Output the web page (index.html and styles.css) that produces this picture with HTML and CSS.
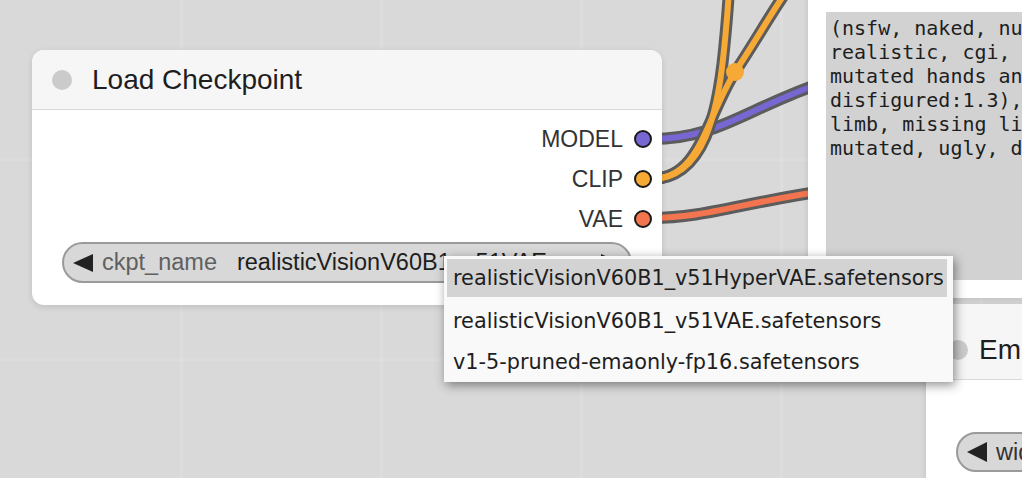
FILE: index.html
```html
<!DOCTYPE html>
<html>
<head>
<meta charset="utf-8">
<link rel="stylesheet" href="styles.css">
</head>
<body>
<div class="canvas">
  <svg class="wires" width="1022" height="478" viewBox="0 0 1022 478">
    <g fill="none" stroke-linecap="round">
      <path class="wire-outline" d="M651,139 C720,139 745,108 830,80"/>
      <path class="wire-core" stroke="#7767d3" d="M651,139 C720,139 745,108 830,80"/>
      <path class="wire-outline" d="M651,218 C705,218 740,203 830,190"/>
      <path class="wire-core" stroke="#f2754f" d="M651,218 C705,218 740,203 830,190"/>
      <path class="wire-outline" d="M651,179 C705,179 718,110 724,50 C726,30 728,10 729,-12"/>
      <path class="wire-outline" d="M651,179 C700,179 705,120 735,72 C755,42 770,15 786,-8"/>
      <path class="wire-core" stroke="#f6a935" d="M651,179 C705,179 718,110 724,50 C726,30 728,10 729,-12"/>
      <path class="wire-core" stroke="#f6a935" d="M651,179 C700,179 705,120 735,72 C755,42 770,15 786,-8"/>
    </g>
    <circle cx="735" cy="72" r="9" fill="#f6a935"/>
  </svg>

  <div class="node node-ckpt">
    <div class="node-header">
      <span class="node-dot"></span>
      <span class="node-title">Load Checkpoint</span>
    </div>
    <div class="node-body">
      <div class="outputs">
        <div class="out-row"><span class="out-label">MODEL</span><span class="slot slot-model"></span></div>
        <div class="out-row"><span class="out-label">CLIP</span><span class="slot slot-clip"></span></div>
        <div class="out-row"><span class="out-label">VAE</span><span class="slot slot-vae"></span></div>
      </div>
      <div class="combo">
        <svg class="arrow" width="20" height="18" viewBox="0 0 20 18"><polygon points="0,9 20,0 20,18" fill="#222"/></svg>
        <span class="combo-name">ckpt_name</span>
        <span class="combo-value">realisticVisionV60B1_v51VAE.safetensors</span>
        <svg class="arrow" width="20" height="18" viewBox="0 0 20 18"><polygon points="0,0 20,9 0,18" fill="#222"/></svg>
      </div>
    </div>
  </div>

  <div class="node node-prompt">
    <div class="prompt-area">(nsfw, naked, nude, deformed iris, deformed pupils, semi-
realistic, cgi, 3d, render, sketch, cartoon, drawing, anime,
mutated hands and fingers:1.4), (deformed, distorted,
disfigured:1.3), poorly drawn, bad anatomy, wrong anatomy, extra
limb, missing limb, floating limbs, disconnected limbs, mutation,
mutated, ugly, disgusting, amputation</div>
  </div>

  <div class="node node-latent">
    <div class="node-header latent-header">
      <span class="node-dot"></span>
      <span class="node-title">Empty Latent Image</span>
    </div>
    <div class="latent-body">
      <div class="combo combo-small">
        <svg class="arrow" width="20" height="20" viewBox="0 0 20 20"><polygon points="0,10 20,0 20,20" fill="#222"/></svg>
        <span class="combo-name dark">width</span>
      </div>
    </div>
  </div>

  <div class="menu">
    <div class="menu-item active">realisticVisionV60B1_v51HyperVAE.safetensors</div>
    <div class="menu-item">realisticVisionV60B1_v51VAE.safetensors</div>
    <div class="menu-item">v1-5-pruned-emaonly-fp16.safetensors</div>
  </div>
</div>
</body>
</html>
```

FILE: styles.css
```css
html, body {
  margin: 0;
  padding: 0;
}

body {
  width: 1022px;
  height: 478px;
  overflow: hidden;
  background-color: #d9d9d9;
  font-family: "Liberation Sans", Arial, sans-serif;
}

.canvas {
  position: relative;
  width: 1022px;
  height: 478px;
  overflow: hidden;
  background-image:
    linear-gradient(90deg, rgba(255,255,255,0.1) 3px, transparent 3px),
    linear-gradient(rgba(255,255,255,0.07) 3px, transparent 3px);
  background-size: 200px 200px;
  background-position: 180px 158px;
}

.wires {
  position: absolute;
  left: 0;
  top: 0;
}

.wire-outline {
  stroke: #5c5c5c;
  stroke-width: 12;
}

.wire-core {
  stroke-width: 6;
}

.node {
  position: absolute;
  background: #ffffff;
  box-shadow: 0 2px 6px rgba(0,0,0,0.12);
}

.node-ckpt {
  left: 32px;
  top: 50px;
  width: 630px;
  height: 255px;
  border-radius: 12px;
  display: flex;
  flex-direction: column;
}

.node-header {
  height: 59px;
  background: #f6f6f6;
  border-bottom: 1px solid #dadada;
  border-radius: 12px 12px 0 0;
  display: flex;
  align-items: center;
  padding-left: 20px;
  gap: 20px;
}

.node-dot {
  width: 20px;
  height: 20px;
  border-radius: 50%;
  background: #cbcbcb;
  flex: none;
}

.node-title {
  font-size: 28px;
  color: #1e1e1e;
  white-space: nowrap;
}

.node-body {
  padding: 9px 10px 0 30px;
  display: flex;
  flex-direction: column;
}

.outputs {
  display: flex;
  flex-direction: column;
  align-items: flex-end;
}

.out-row {
  height: 40px;
  display: flex;
  align-items: center;
  gap: 11px;
}

.out-label {
  font-size: 23px;
  color: #333;
}

.slot {
  width: 14px;
  height: 14px;
  border-radius: 50%;
  border: 2px solid #1a1a1a;
}

.slot-model { background: #7767d3; }
.slot-clip { background: #f6a935; }
.slot-vae { background: #f2754f; }

.combo {
  margin-top: 3px;
  margin-right: 20px;
  height: 37px;
  border: 2px solid #9a9a9a;
  border-radius: 22px;
  background: #d8d8d8;
  display: flex;
  align-items: center;
  padding: 0 9px 0 9px;
  gap: 0;
}

.combo .arrow {
  flex: none;
}

.combo-name {
  font-size: 23.5px;
  color: #606060;
  margin-left: 9px;
  white-space: nowrap;
}

.combo-name.dark {
  color: #333;
}

.combo-value {
  flex: 1;
  font-size: 23.5px;
  color: #1e1e1e;
  margin-left: 20px;
  white-space: nowrap;
  overflow: hidden;
  text-overflow: ellipsis;
  padding-right: 8px;
}

.node-prompt {
  left: 808px;
  top: -30px;
  width: 260px;
  height: 328px;
  border-radius: 12px;
  padding: 42px 0 0 18px;
  box-sizing: border-box;
}

.prompt-area {
  height: 268px;
  background: #d2d2d2;
  padding: 4px 0 0 4px;
  box-sizing: border-box;
  font-family: "DejaVu Sans Mono", monospace;
  font-size: 20px;
  line-height: 24px;
  color: #1e1e1e;
  white-space: pre;
  overflow: hidden;
}

.node-latent {
  left: 926px;
  top: 304px;
  width: 200px;
  height: 200px;
  border-radius: 12px;
  display: flex;
  flex-direction: column;
}

.latent-header {
  padding-top: 16px;
  box-sizing: border-box;
  height: 76px;
  gap: 11px;
  padding-left: 22px;
}

.latent-body {
  padding: 52px 0 0 30px;
}

.combo-small {
  margin: 0;
  width: 200px;
  height: 36px;
}

.menu {
  position: absolute;
  left: 444px;
  top: 256px;
  width: 509px;
  height: 126px;
  box-sizing: border-box;
  padding: 3px 6px 0 3px;
  background: #f9f9f9;
  box-shadow: 2px 3px 10px rgba(0,0,0,0.45);
  font-family: "DejaVu Sans", Verdana, sans-serif;
  font-size: 20.8px;
  color: #1e1e1e;
}

.menu-item {
  height: 41px;
  display: flex;
  align-items: center;
  padding-left: 6px;
  white-space: nowrap;
}

.menu-item.active {
  background: #d3d3d3;
  height: 38px;
  margin-bottom: 3px;
}
```
